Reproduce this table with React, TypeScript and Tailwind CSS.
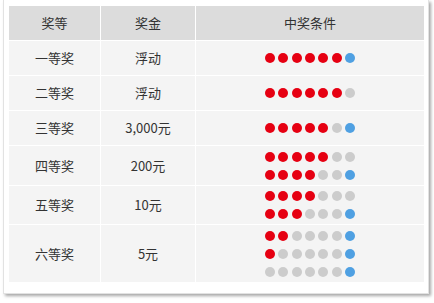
type Dot = "r" | "b" | "g";

interface Prize {
  level: string;
  amount: string;
  rows: string[];
  height: string;
}

const prizes: Prize[] = [
  { level: "一等奖", amount: "浮动", rows: ["rrrrrrb"], height: "h-[34px]" },
  { level: "二等奖", amount: "浮动", rows: ["rrrrrrg"], height: "h-[34px]" },
  { level: "三等奖", amount: "3,000元", rows: ["rrrrrgb"], height: "h-[34px]" },
  { level: "四等奖", amount: "200元", rows: ["rrrrrgg", "rrrrggb"], height: "h-[39px]" },
  { level: "五等奖", amount: "10元", rows: ["rrrrggg", "rrrgggb"], height: "h-[38px]" },
  { level: "六等奖", amount: "5元", rows: ["rrggggb", "rgggggb", "ggggggb"], height: "h-[57px]" },
];

const dotColor: Record<Dot, string> = {
  r: "bg-[#e60012]",
  b: "bg-[#4fa0e2]",
  g: "bg-[#cccccc]",
};

const Balls = ({ row }: { row: string }) => (
  <div className="flex gap-[3.3px]">
    {row.split("").map((c, i) => (
      <span key={i} className={`block h-[10px] w-[10px] rounded-full ${dotColor[c as Dot]}`} />
    ))}
  </div>
);

export default function App() {
  return (
    <div
      className="h-[303px] w-[434px] bg-white pl-[3px] text-[13px] text-[#333]"
      style={{ fontFamily: '"Noto Sans CJK SC", "Noto Sans", sans-serif' }}
    >
      <div className="w-[426px] border border-t-0 border-[#e2e2e2] bg-white pb-[11px] pl-[5px] pr-[3px] pt-[6px] shadow-[2px_2px_3px_rgba(0,0,0,0.35)]">
        <div className="grid grid-cols-[91px_94px_228px] gap-px bg-white">
          <div className="flex h-[34px] items-center justify-center bg-[#dcdcdc]">奖等</div>
          <div className="flex h-[34px] items-center justify-center bg-[#dcdcdc]">奖金</div>
          <div className="flex h-[34px] items-center justify-center bg-[#dcdcdc]">中奖条件</div>
          {prizes.map((p) => (
            <div key={p.level} className="contents">
              <div className={`flex items-center justify-center bg-[#f4f4f4] ${p.height}`}>{p.level}</div>
              <div className={`flex items-center justify-center bg-[#f4f4f4] ${p.height}`}>{p.amount}</div>
              <div className={`flex flex-col items-center justify-center gap-[8px] bg-[#f4f4f4] ${p.height}`}>
                {p.rows.map((r, i) => (
                  <Balls key={i} row={r} />
                ))}
              </div>
            </div>
          ))}
        </div>
      </div>
    </div>
  );
}
